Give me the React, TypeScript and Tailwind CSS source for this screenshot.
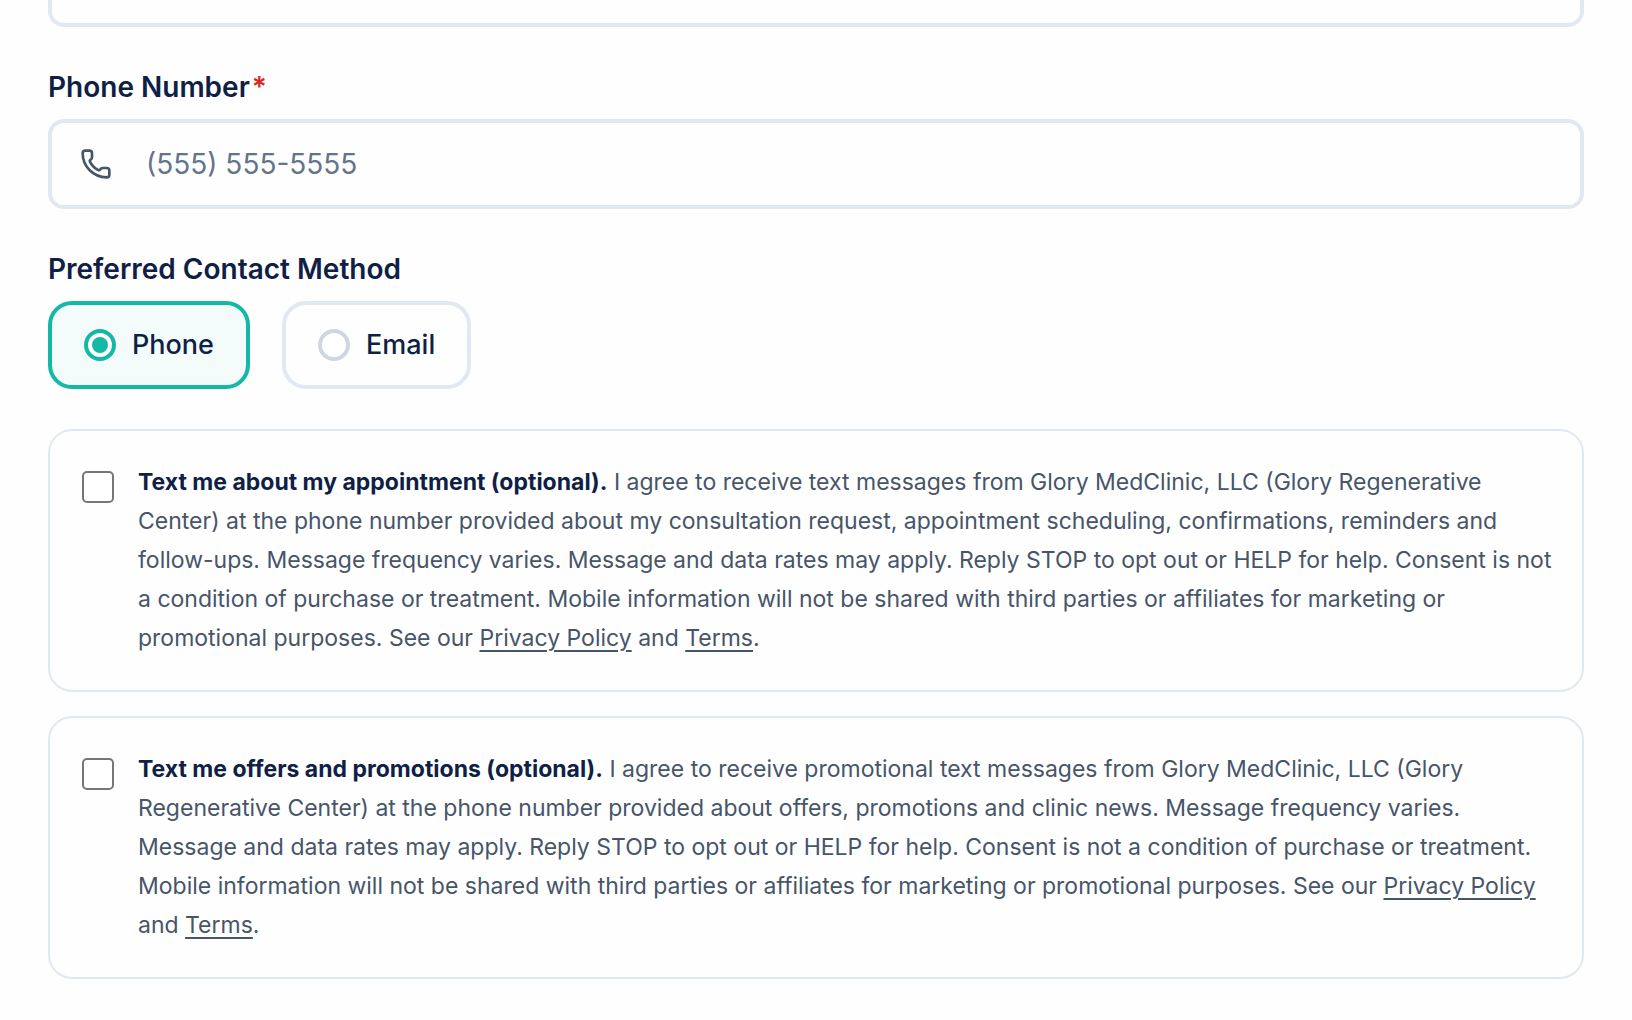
import React, { useState } from "react";
import { Phone } from "lucide-react";

const CONTACT_METHODS = [
  { id: "phone", label: "Phone" },
  { id: "email", label: "Email" },
];

const CONSENTS = [
  {
    id: "sms-appointment",
    title: "Text me about my appointment (optional).",
    body: "I agree to receive text messages from Glory MedClinic, LLC (Glory Regenerative Center) at the phone number provided about my consultation request, appointment scheduling, confirmations, reminders and follow-ups. Message frequency varies. Message and data rates may apply. Reply STOP to opt out or HELP for help. Consent is not a condition of purchase or treatment. Mobile information will not be shared with third parties or affiliates for marketing or promotional purposes. See our",
  },
  {
    id: "sms-offers",
    title: "Text me offers and promotions (optional).",
    body: "I agree to receive promotional text messages from Glory MedClinic, LLC (Glory Regenerative Center) at the phone number provided about offers, promotions and clinic news. Message frequency varies. Message and data rates may apply. Reply STOP to opt out or HELP for help. Consent is not a condition of purchase or treatment. Mobile information will not be shared with third parties or affiliates for marketing or promotional purposes. See our",
  },
];

export default function App() {
  const [email, setEmail] = useState("");
  const [phone, setPhone] = useState("");
  const [method, setMethod] = useState("phone");
  const [agreed, setAgreed] = useState<Record<string, boolean>>({});

  return (
    <div className="min-h-screen overflow-hidden bg-[#fefefe] font-['Inter',sans-serif] text-[#0f1f45]">
      <form className="-mt-[63px] flex flex-col gap-10 px-12 pb-10">
        <input
          type="email"
          aria-label="Email"
          value={email}
          onChange={(e) => setEmail(e.target.value)}
          className="h-[90px] w-full rounded-2xl border-4 border-[#e2e8f0] px-24 text-[28px] outline-none"
        />

        <div>
          <label htmlFor="phone-number" className="mb-3 block text-[28px] leading-10 font-semibold">
            Phone Number<span className="ml-0.5 text-[#dc2626]">*</span>
          </label>
          <div className="flex h-[90px] items-center gap-8 rounded-2xl border-4 border-[#e2e8f0] px-7">
            <Phone className="size-8 shrink-0 text-[#475569]" />
            <input
              id="phone-number"
              type="tel"
              placeholder="(555) 555-5555"
              value={phone}
              onChange={(e) => setPhone(e.target.value)}
              className="w-full min-w-0 bg-transparent pl-0.5 text-[28px] outline-none placeholder:text-[#64748b]"
            />
          </div>
        </div>

        <fieldset>
          <legend className="mb-3 text-[28px] leading-10 font-semibold">Preferred Contact Method</legend>
          <div className="flex gap-8">
            {CONTACT_METHODS.map((m) => (
              <MethodOption key={m.id} id={m.id} label={m.label} checked={method === m.id} onSelect={setMethod} />
            ))}
          </div>
        </fieldset>

        <div className="flex flex-col gap-6">
          {CONSENTS.map((c) => (
            <ConsentCard
              key={c.id}
              {...c}
              checked={!!agreed[c.id]}
              onToggle={() => setAgreed((prev) => ({ ...prev, [c.id]: !prev[c.id] }))}
            />
          ))}
        </div>
      </form>
    </div>
  );
}

type MethodOptionProps = {
  id: string;
  label: string;
  checked: boolean;
  onSelect: (id: string) => void;
};

function MethodOption({ id, label, checked, onSelect }: MethodOptionProps) {
  return (
    <label
      className={`flex h-[88px] cursor-pointer items-center gap-4 rounded-3xl border-4 px-8 text-[27px] font-medium ${
        checked ? "border-[#14b8a6] bg-[#f3fbfb]" : "border-[#e2e8f0]"
      }`}
    >
      <input
        type="radio"
        name="contact-method"
        value={id}
        checked={checked}
        onChange={() => onSelect(id)}
        className="grid size-8 appearance-none place-items-center rounded-full border-4 border-[#cfd6df] bg-white before:size-4 before:rounded-full checked:border-[#14b8a6] checked:before:bg-[#14b8a6]"
      />
      {label}
    </label>
  );
}

type ConsentCardProps = {
  id: string;
  title: string;
  body: string;
  checked: boolean;
  onToggle: () => void;
};

function ConsentCard({ id, title, body, checked, onToggle }: ConsentCardProps) {
  return (
    <div className="flex items-start gap-6 rounded-3xl border-2 border-[#e2e8f0] py-8 pr-6 pl-8">
      <input
        id={id}
        type="checkbox"
        checked={checked}
        onChange={onToggle}
        className="mt-2 size-8 shrink-0 appearance-none rounded-[5px] border-2 border-[#767676] bg-white checked:border-[#14b8a6] checked:bg-[#14b8a6]"
      />
      <label htmlFor={id} className="text-[23px] leading-[39px] text-[#475569]">
        <strong className="font-bold text-[#0f1f45]">{title}</strong> {body}{" "}
        <a href="#privacy" className="underline decoration-2 underline-offset-4">Privacy Policy</a> and{" "}
        <a href="#terms" className="underline decoration-2 underline-offset-4">Terms</a>.
      </label>
    </div>
  );
}
